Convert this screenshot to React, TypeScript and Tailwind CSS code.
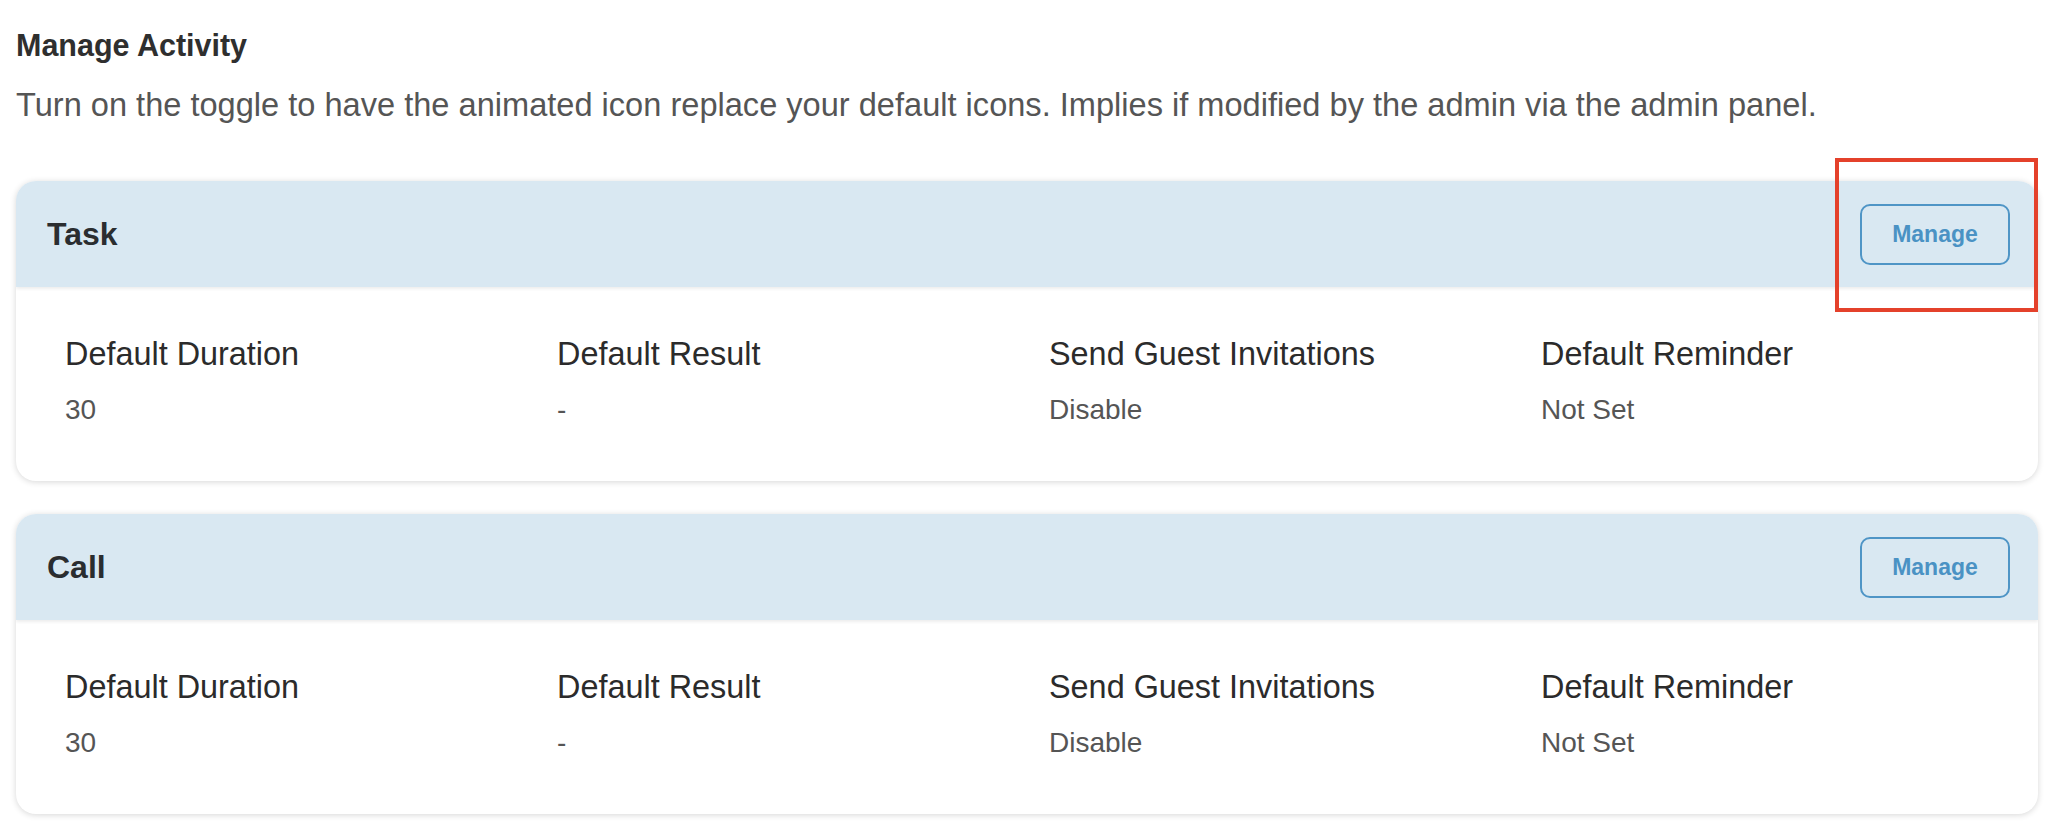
const fields = [
  { label: "Default Duration", value: "30" },
  { label: "Default Result", value: "-" },
  { label: "Send Guest Invitations", value: "Disable" },
  { label: "Default Reminder", value: "Not Set" },
];

function ActivityCard({ title }: { title: string }) {
  return (
    <div className="rounded-[20px] bg-white shadow-[0_1px_6px_rgba(0,0,0,0.16)] overflow-hidden">
      <div className="flex h-[106px] items-center justify-between bg-[#d9e8f2] pl-[31px] pr-[28px] shadow-[0_2px_3px_rgba(0,0,0,0.07)]">
        <span className="text-[32px] font-bold leading-[40px] text-[#2a2d30]">{title}</span>
        <button className="flex h-[61px] w-[150px] items-center justify-center rounded-[10px] border-2 border-[#4f95c6] text-[23px] font-bold text-[#4a92c4]">
          Manage
        </button>
      </div>
      <div className="grid grid-cols-[repeat(4,492px)] pl-[49px] pt-[47px] pb-[53px]">
        {fields.map((f) => (
          <div key={f.label} className="flex flex-col gap-[18px]">
            <div className="text-[32.4px] leading-[40px] text-[#2b2b2b]">{f.label}</div>
            <div className="text-[28px] leading-[36px] text-[#555555]">{f.value}</div>
          </div>
        ))}
      </div>
    </div>
  );
}

export default function App() {
  return (
    <div
      className="relative h-[838px] w-[2060px] bg-white pl-4 pr-[22px] pt-[27px]"
      style={{ fontFamily: '"Liberation Sans", Arial, sans-serif' }}
    >
      <h1 className="text-[30.5px] font-bold leading-[36px] text-[#2f2f2f]">Manage Activity</h1>
      <p className="mt-[22px] text-[32.6px] leading-[40px] text-[#555555]">
        Turn on the toggle to have the animated icon replace your default icons. Implies if modified by the admin via the admin panel.
      </p>
      <div className="mt-[56px] flex flex-col gap-[33px]">
        <ActivityCard title="Task" />
        <ActivityCard title="Call" />
      </div>
      {/* highlight annotation */}
      <div className="pointer-events-none absolute left-[1835px] top-[158px] h-[154px] w-[203px] border-4 border-[#e4412b]" />
    </div>
  );
}
